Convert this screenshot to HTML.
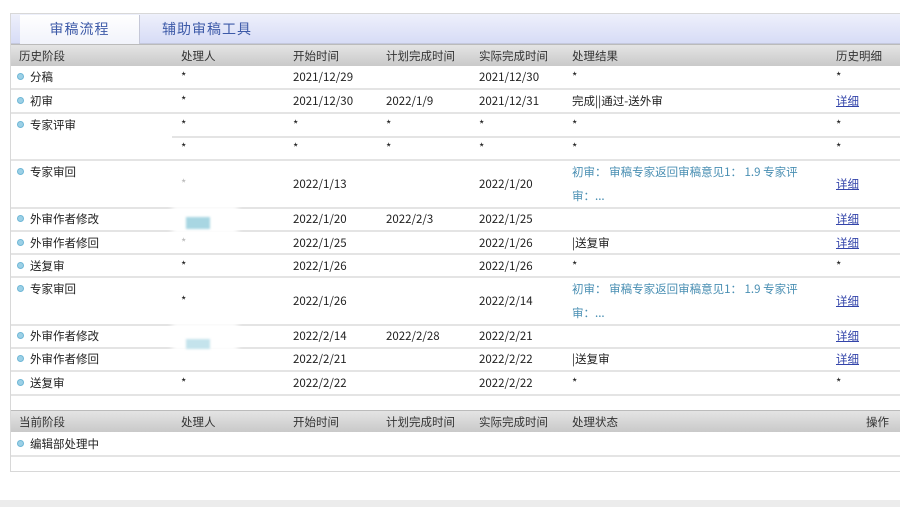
<!DOCTYPE html>
<html><head><meta charset="utf-8">
<style>
*{margin:0;padding:0;box-sizing:border-box}
body{width:900px;height:507px;background:#fff;position:relative;overflow:hidden;font-family:"Noto Sans CJK SC","Liberation Sans",sans-serif;font-size:11.5px;color:#222}
.abs{position:absolute;white-space:nowrap;line-height:16px}
.frame{position:absolute;left:10px;top:13px;width:895px;height:459px;border:1px solid #d8d8d8;border-right:none}
.tabbar{position:absolute;left:11px;top:14px;width:889px;height:30px;background:linear-gradient(#eef0fb,#d7dcf6);border-bottom:1px solid #c4c8dc}
.tab1{position:absolute;left:20px;top:15px;width:120px;height:29px;background:linear-gradient(#fff,#f1f3fb);border-right:1px solid #c5c8d8;color:#3d5aa8;font-size:14px;text-align:center;line-height:28px;letter-spacing:1px}
.tab2{position:absolute;left:162px;top:15px;color:#3d5aa8;font-size:14px;line-height:28px;letter-spacing:1px}
.hdr{position:absolute;left:11px;width:889px;height:22px;background:linear-gradient(#e4e4e4,#c9c9c9);border-top:1px solid #bbb}
.hdr span{position:absolute;top:3px;color:#333;font-size:11.5px;line-height:16px}
.line{position:absolute;height:2px;background:#e4e4e4}
.dot{position:absolute;width:7px;height:7px;border-radius:50%;background:#9cd0e6;border:1px solid #6fb7d6}
.st{position:absolute;font-size:11.5px;color:#222;line-height:16px;white-space:nowrap}
.b{color:#4a8fb3}
a{color:#3344aa;text-decoration:underline}
.blur{position:absolute;background:#a8d6e2;filter:blur(1px)}
</style></head><body>
<div class="frame"></div>
<div class="tabbar"></div>
<div class="tab1">审稿流程</div>
<div class="tab2">辅助审稿工具</div>

<div class="hdr" style="top:44px"><span style="left:8px">历史阶段</span><span style="left:170px">处理人</span><span style="left:282px">开始时间</span><span style="left:375px">计划完成时间</span><span style="left:468px">实际完成时间</span><span style="left:561px">处理结果</span><span style="left:825px">历史明细</span></div>

<div class="line" style="left:11px;width:889px;top:88px"></div>
<div class="line" style="left:11px;width:889px;top:112px"></div>
<div class="line" style="left:172px;width:728px;top:136px"></div>
<div class="line" style="left:11px;width:889px;top:159px"></div>
<div class="line" style="left:11px;width:889px;top:207px"></div>
<div class="line" style="left:11px;width:889px;top:230px"></div>
<div class="line" style="left:11px;width:889px;top:253px"></div>
<div class="line" style="left:11px;width:889px;top:276px"></div>
<div class="line" style="left:11px;width:889px;top:324px"></div>
<div class="line" style="left:11px;width:889px;top:347px"></div>
<div class="line" style="left:11px;width:889px;top:370px"></div>
<div class="line" style="left:11px;width:889px;top:394px"></div>
<div class="line" style="left:11px;width:889px;top:455px"></div>

<div class="abs" style="left:172px;top:205px;width:66px;height:30px;background:#fff;filter:blur(3px)"></div>
<div class="abs" style="left:172px;top:322px;width:66px;height:30px;background:#fff;filter:blur(3px)"></div>
<div class="blur" style="left:186px;top:217px;width:24px;height:12px"></div>
<div class="blur" style="left:186px;top:339px;width:24px;height:10px;background:#c4e3ec"></div>

<div class="dot" style="left:17px;top:73px"></div><div class="st" style="left:30px;top:69px">分稿</div>
<div class="dot" style="left:17px;top:97px"></div><div class="st" style="left:30px;top:93px">初审</div>
<div class="dot" style="left:17px;top:121px"></div><div class="st" style="left:30px;top:117px">专家评审</div>
<div class="dot" style="left:17px;top:168px"></div><div class="st" style="left:30px;top:164px">专家审回</div>
<div class="dot" style="left:17px;top:215px"></div><div class="st" style="left:30px;top:211px">外审作者修改</div>
<div class="dot" style="left:17px;top:239px"></div><div class="st" style="left:30px;top:235px">外审作者修回</div>
<div class="dot" style="left:17px;top:262px"></div><div class="st" style="left:30px;top:258px">送复审</div>
<div class="dot" style="left:17px;top:285px"></div><div class="st" style="left:30px;top:281px">专家审回</div>
<div class="dot" style="left:17px;top:332px"></div><div class="st" style="left:30px;top:328px">外审作者修改</div>
<div class="dot" style="left:17px;top:355px"></div><div class="st" style="left:30px;top:351px">外审作者修回</div>
<div class="dot" style="left:17px;top:379px"></div><div class="st" style="left:30px;top:375px">送复审</div>

<div class="abs" style="left:181px;top:69px">*</div><div class="abs" style="left:293px;top:69px">2021/12/29</div><div class="abs" style="left:479px;top:69px">2021/12/30</div><div class="abs" style="left:572px;top:69px">*</div><div class="abs" style="left:836px;top:69px">*</div>
<div class="abs" style="left:181px;top:93px">*</div><div class="abs" style="left:293px;top:93px">2021/12/30</div><div class="abs" style="left:386px;top:93px">2022/1/9</div><div class="abs" style="left:479px;top:93px">2021/12/31</div><div class="abs" style="left:572px;top:93px">完成||通过-送外审</div><a class="abs" style="left:836px;top:93px">详细</a>
<div class="abs" style="left:181px;top:117px">*</div><div class="abs" style="left:293px;top:117px">*</div><div class="abs" style="left:386px;top:117px">*</div><div class="abs" style="left:479px;top:117px">*</div><div class="abs" style="left:572px;top:117px">*</div><div class="abs" style="left:836px;top:117px">*</div>
<div class="abs" style="left:181px;top:140px">*</div><div class="abs" style="left:293px;top:140px">*</div><div class="abs" style="left:386px;top:140px">*</div><div class="abs" style="left:479px;top:140px">*</div><div class="abs" style="left:572px;top:140px">*</div><div class="abs" style="left:836px;top:140px">*</div>
<div class="abs" style="left:181px;top:176px;color:#bbb">*</div><div class="abs" style="left:293px;top:176px">2022/1/13</div><div class="abs" style="left:479px;top:176px">2022/1/20</div>
<div class="abs b" style="left:572px;top:164px">初审： 审稿专家返回审稿意见1： 1.9 专家评</div><div class="abs b" style="left:572px;top:188px">审：...</div><a class="abs" style="left:836px;top:176px">详细</a>
<div class="abs" style="left:293px;top:211px">2022/1/20</div><div class="abs" style="left:386px;top:211px">2022/2/3</div><div class="abs" style="left:479px;top:211px">2022/1/25</div><a class="abs" style="left:836px;top:211px">详细</a>
<div class="abs" style="left:181px;top:235px;color:#bbb">*</div><div class="abs" style="left:293px;top:235px">2022/1/25</div><div class="abs" style="left:479px;top:235px">2022/1/26</div><div class="abs" style="left:572px;top:235px">|送复审</div><a class="abs" style="left:836px;top:235px">详细</a>
<div class="abs" style="left:181px;top:258px">*</div><div class="abs" style="left:293px;top:258px">2022/1/26</div><div class="abs" style="left:479px;top:258px">2022/1/26</div><div class="abs" style="left:572px;top:258px">*</div><div class="abs" style="left:836px;top:258px">*</div>
<div class="abs" style="left:181px;top:293px">*</div><div class="abs" style="left:293px;top:293px">2022/1/26</div><div class="abs" style="left:479px;top:293px">2022/2/14</div>
<div class="abs b" style="left:572px;top:281px">初审： 审稿专家返回审稿意见1： 1.9 专家评</div><div class="abs b" style="left:572px;top:305px">审：...</div><a class="abs" style="left:836px;top:293px">详细</a>
<div class="abs" style="left:293px;top:328px">2022/2/14</div><div class="abs" style="left:386px;top:328px">2022/2/28</div><div class="abs" style="left:479px;top:328px">2022/2/21</div><a class="abs" style="left:836px;top:328px">详细</a>
<div class="abs" style="left:293px;top:351px">2022/2/21</div><div class="abs" style="left:479px;top:351px">2022/2/22</div><div class="abs" style="left:572px;top:351px">|送复审</div><a class="abs" style="left:836px;top:351px">详细</a>
<div class="abs" style="left:181px;top:375px">*</div><div class="abs" style="left:293px;top:375px">2022/2/22</div><div class="abs" style="left:479px;top:375px">2022/2/22</div><div class="abs" style="left:572px;top:375px">*</div><div class="abs" style="left:836px;top:375px">*</div>

<div class="hdr" style="top:410px"><span style="left:8px">当前阶段</span><span style="left:170px">处理人</span><span style="left:282px">开始时间</span><span style="left:375px">计划完成时间</span><span style="left:468px">实际完成时间</span><span style="left:561px">处理状态</span><span style="left:855px">操作</span></div>
<div class="dot" style="left:17px;top:440px"></div><div class="st" style="left:30px;top:436px">编辑部处理中</div>

<div class="abs" style="left:0;top:500px;width:900px;height:7px;background:#ececec"></div>
</body></html>
